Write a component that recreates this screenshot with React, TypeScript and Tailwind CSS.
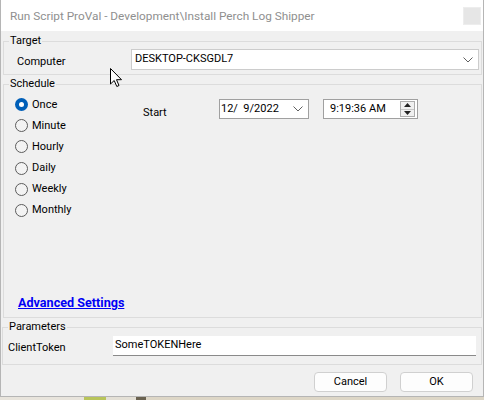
import React from "react";

const font = "font-['Roboto','Noto_Sans',sans-serif]";

const options = ["Once", "Minute", "Hourly", "Daily", "Weekly", "Monthly"];

function Radio({ label, checked }: { label: string; checked?: boolean }) {
  return (
    <div className="h-[21px] flex items-center gap-[4px]">
      {checked ? (
        <span className="w-[13px] h-[13px] rounded-full bg-[#005fb8] flex items-center justify-center">
          <span className="w-[5px] h-[5px] rounded-full bg-white" />
        </span>
      ) : (
        <span className="w-[13px] h-[13px] rounded-full border border-[#5c5c5c] bg-[#f3f3f3]" />
      )}
      <span className="leading-[16px]">{label}</span>
    </div>
  );
}

function Chevron({ className }: { className?: string }) {
  return (
    <svg width="10" height="6" viewBox="0 0 10 6" className={className}>
      <path d="M0.5 0.5 L5 5 L9.5 0.5" fill="none" stroke="#606060" strokeWidth="1" />
    </svg>
  );
}

function Cursor() {
  return (
    <svg width="13" height="20" viewBox="0 0 13 20" className="absolute left-[110px] top-[68px]">
      <path
        d="M0.5 0.5 L0.5 16 L4.2 12.5 L6.8 18.5 L9 17.5 L6.5 11.7 L11.5 11.7 Z"
        fill="white"
        stroke="black"
        strokeWidth="1"
        strokeLinejoin="round"
      />
    </svg>
  );
}

export default function App() {
  return (
    <div className={`relative w-[484px] h-[400px] overflow-hidden bg-[#d9d4c8] text-[11px] text-black ${font}`}>
      <div className="h-[397px] bg-[#f0f0f0] border-x border-b border-[#b5b5b5] flex flex-col">
        {/* title bar */}
        <div className="h-[31px] bg-white flex items-center justify-between pl-[9px] pr-[2px]">
          <span className="text-[11.8px] text-[#8f8f8f] leading-[16px]">
            Run Script ProVal - Development\Install Perch Log Shipper
          </span>
          <span className="w-[18px] h-[18px] bg-[#e6e6e6] border border-[#ededed]" />
        </div>

        {/* Target */}
        <fieldset className="mt-[2px] ml-[2px] mr-[1px] border border-[#dcdcdc]">
          <legend className="ml-[5px] px-[1px] leading-[16px]">Target</legend>
          <div className="flex items-center pl-[13px] pr-[2px] pb-[4px]">
            <span className="w-[114px] leading-[16px] pt-[4px]">Computer</span>
            <div className="flex-1 h-[21px] bg-white border border-[#cccccc] flex items-center justify-between pl-[3px] pr-[5px]">
              <span>DESKTOP-CKSGDL7</span>
              <Chevron />
            </div>
          </div>
        </fieldset>

        {/* Schedule */}
        <fieldset className="mt-[1px] ml-[2px] mr-[1px] border border-[#dcdcdc] h-[242px]">
          <legend className="ml-[5px] px-[1px] leading-[16px]">Schedule</legend>
          <div className="h-[224px] flex flex-col">
            <div className="flex pt-[2px] pl-[11px]">
              <div className="w-[128px] flex flex-col gap-[0.2px]">
                {options.map((o, i) => (
                  <Radio key={o} label={o} checked={i === 0} />
                ))}
              </div>
              <div className="flex items-start pt-[5px]">
                <span className="w-[76px] leading-[16px] pt-[6px]">Start</span>
                <div className="w-[90px] h-[20px] bg-white border border-[#a0a0a0] flex items-center justify-between pl-[1px] pr-[5px]">
                  <span className="whitespace-pre">12/  9/2022</span>
                  <Chevron />
                </div>
                <div className="ml-[14px] w-[95px] h-[20px] bg-white border border-[#a0a0a0] flex items-center justify-between pl-[6px] pr-[2px]">
                  <span>9:19:36 AM</span>
                  <div className="w-[15px] h-[16px] border border-[#adadad] bg-[#f0f0f0] flex flex-col">
                    <div className="flex-1 flex items-center justify-center border-b border-[#c8c8c8]">
                      <svg width="7" height="4" viewBox="0 0 7 4">
                        <path d="M0 4 L3.5 0 L7 4 Z" fill="#222" />
                      </svg>
                    </div>
                    <div className="flex-1 flex items-center justify-center">
                      <svg width="7" height="4" viewBox="0 0 7 4">
                        <path d="M0 0 L3.5 4 L7 0 Z" fill="#222" />
                      </svg>
                    </div>
                  </div>
                </div>
              </div>
            </div>
            <div className="mt-auto pl-[14px] pb-[4px]">
              <span className="text-[12.6px] font-bold text-[#0000f5] underline leading-[16px]">
                Advanced Settings
              </span>
            </div>
          </div>
        </fieldset>

        {/* Parameters */}
        <fieldset className="mt-[1px] ml-[1px] mr-[1px] border border-[#dcdcdc]">
          <legend className="ml-[5px] px-[1px] leading-[16px]">Parameters</legend>
          <div className="flex items-center pl-[5px] pr-[5px] pt-[1px] pb-[8px]">
            <span className="w-[105px] leading-[16px] pt-[3px]">ClientToken</span>
            <div className="flex-1 h-[20px] bg-white border-b border-[#8a8a8a] flex items-center pl-[2px]">
              SomeTOKENHere
            </div>
          </div>
        </fieldset>

        {/* buttons */}
        <div className="flex justify-end gap-[13px] pr-[10px] mt-[7px]">
          <button className="w-[73px] h-[20px] rounded-[4px] bg-[#fdfdfd] border border-[#d0d0d0] leading-[16px]">
            Cancel
          </button>
          <button className="w-[73px] h-[20px] rounded-[4px] bg-[#fdfdfd] border border-[#d0d0d0] leading-[16px]">
            OK
          </button>
        </div>
      </div>

      {/* desktop strip below window */}
      <div className="flex h-[3px]">
        <span className="w-[84px] bg-[#e8e4dc]" />
        <span className="w-[22px] bg-[#b8c45a]" />
        <span className="w-[30px] bg-[#e4e0d6]" />
        <span className="w-[10px] bg-[#6a6250]" />
        <span className="flex-1 bg-[#ddd6c6]" />
      </div>

      <Cursor />
    </div>
  );
}
